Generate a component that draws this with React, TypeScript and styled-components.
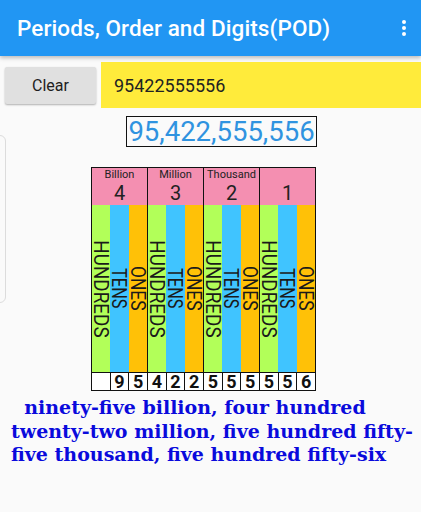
import React from "react";
import styled, { createGlobalStyle } from "styled-components";

const GlobalStyle = createGlobalStyle`
  html, body {
    margin: 0;
    padding: 0;
    background: #fafafa;
  }
  body {
    font-family: Roboto, "Noto Sans", sans-serif;
    width: 421px;
    height: 512px;
    overflow: hidden;
  }
`;

const Screen = styled.div`
  position: relative;
  width: 421px;
  height: 512px;
  background: #fafafa;
`;

const AppBar = styled.header`
  display: flex;
  align-items: center;
  justify-content: space-between;
  height: 56px;
  padding: 0 15px 0 17px;
  box-sizing: border-box;
  background: #2196f3;
  color: #fff;
  box-shadow: 0 2px 4px rgba(0, 0, 0, 0.25);
  position: relative;
  z-index: 1;
`;

const Title = styled.h1`
  margin: 0;
  font-size: 22.5px;
  font-weight: 500;
  letter-spacing: 0.1px;
`;

const MenuDots = styled.div`
  display: flex;
  flex-direction: column;
  gap: 2px;
  span {
    width: 4px;
    height: 4px;
    border-radius: 50%;
    background: #fff;
  }
`;

const InputRow = styled.div`
  display: flex;
  align-items: center;
  gap: 5px;
  padding: 6px 0 0 5px;
`;

const ClearButton = styled.button`
  width: 91px;
  height: 37px;
  border: none;
  border-radius: 2px;
  background: #e0e0e0;
  box-shadow: 0 1px 2px rgba(0, 0, 0, 0.3);
  font-family: Roboto, sans-serif;
  font-size: 16px;
  color: #1e1e1e;
`;

const NumberField = styled.div`
  flex: 1;
  height: 46px;
  display: flex;
  align-items: center;
  padding-left: 13px;
  background: #ffeb3b;
  font-size: 18px;
  color: #222;
`;

const Center = styled.div`
  display: flex;
  justify-content: center;
  padding: 8px 0 0 22px;
`;

const Formatted = styled.div`
  border: 1px solid #111;
  padding: 0 1px;
  height: 29px;
  line-height: 30px;
  font-size: 27.5px;
  color: #2f93e0;
`;

const Chart = styled.div`
  display: flex;
  margin: 20px 0 0 91px;
  width: 225px;
  border: 1px solid #111;
  border-right: none;
  box-sizing: border-box;
`;

const Period = styled.div`
  flex: 1;
  display: flex;
  flex-direction: column;
  border-right: 1px solid #111;
`;

const PeriodHead = styled.div`
  height: 37px;
  background: #f48fb1;
  display: flex;
  flex-direction: column;
  align-items: center;
  color: #222;
`;

const PeriodName = styled.div`
  height: 14px;
  margin-top: 0;
  font-size: 11px;
  line-height: 14px;
`;

const PeriodNum = styled.div`
  font-size: 20px;
  line-height: 23px;
`;

const Places = styled.div`
  display: flex;
  height: 167px;
`;

const Place = styled.div<{ $bg: string }>`
  flex: 1;
  background: ${({ $bg }) => $bg};
  display: flex;
  align-items: center;
  justify-content: center;
  overflow: visible;
`;

const PlaceLabel = styled.span<{ $squeeze: number }>`
  writing-mode: vertical-rl;
  font-size: 20.5px;
  line-height: 18px;
  color: #1a1a1a;
  white-space: nowrap;
  transform: scaleY(${({ $squeeze }) => $squeeze});
`;

const Digits = styled.div`
  display: flex;
  border-top: 1px solid #111;
  background: #fff;
`;

const Digit = styled.div`
  flex: 1;
  height: 17px;
  line-height: 18px;
  text-align: center;
  font-size: 18px;
  font-weight: 700;
  color: #111;
  & + & {
    border-left: 1px solid #111;
  }
`;

const Words = styled.p`
  margin: 5px 0 0 11px;
  width: 408px;
  font-family: "DejaVu Serif", "Liberation Serif", serif;
  font-weight: 700;
  font-size: 19px;
  line-height: 23.5px;
  color: #0a0adc;
  white-space: pre-wrap;
`;

const DrawerEdge = styled.div`
  position: absolute;
  left: -10px;
  top: 135px;
  width: 14px;
  height: 166px;
  border: 1px solid #dcdcdc;
  border-radius: 6px;
`;

const periods = [
  { name: "Billion", num: "4", digits: ["", "9", "5"] },
  { name: "Million", num: "3", digits: ["4", "2", "2"] },
  { name: "Thousand", num: "2", digits: ["5", "5", "5"] },
  { name: "", num: "1", digits: ["5", "5", "6"] },
];

const places = [
  { label: "HUNDREDS", bg: "#b2ff59", squeeze: 0.92 },
  { label: "TENS", bg: "#40c4ff", squeeze: 0.8 },
  { label: "ONES", bg: "#ffc107", squeeze: 0.85 },
];

export default function App() {
  return (
    <Screen>
      <GlobalStyle />
      <AppBar>
        <Title>Periods, Order and Digits(POD)</Title>
        <MenuDots>
          <span />
          <span />
          <span />
        </MenuDots>
      </AppBar>
      <InputRow>
        <ClearButton>Clear</ClearButton>
        <NumberField>95422555556</NumberField>
      </InputRow>
      <Center>
        <Formatted>95,422,555,556</Formatted>
      </Center>
      <Chart>
        {periods.map((p) => (
          <Period key={p.num}>
            <PeriodHead>
              <PeriodName>{p.name}</PeriodName>
              <PeriodNum>{p.num}</PeriodNum>
            </PeriodHead>
            <Places>
              {places.map((pl) => (
                <Place key={pl.label} $bg={pl.bg}>
                  <PlaceLabel $squeeze={pl.squeeze}>{pl.label}</PlaceLabel>
                </Place>
              ))}
            </Places>
            <Digits>
              {p.digits.map((d, i) => (
                <Digit key={i}>{d}</Digit>
              ))}
            </Digits>
          </Period>
        ))}
      </Chart>
      <Words>{"  ninety-five billion, four hundred twenty-two million, five hundred fifty-five thousand, five hundred fifty-six"}</Words>
      <DrawerEdge />
    </Screen>
  );
}
